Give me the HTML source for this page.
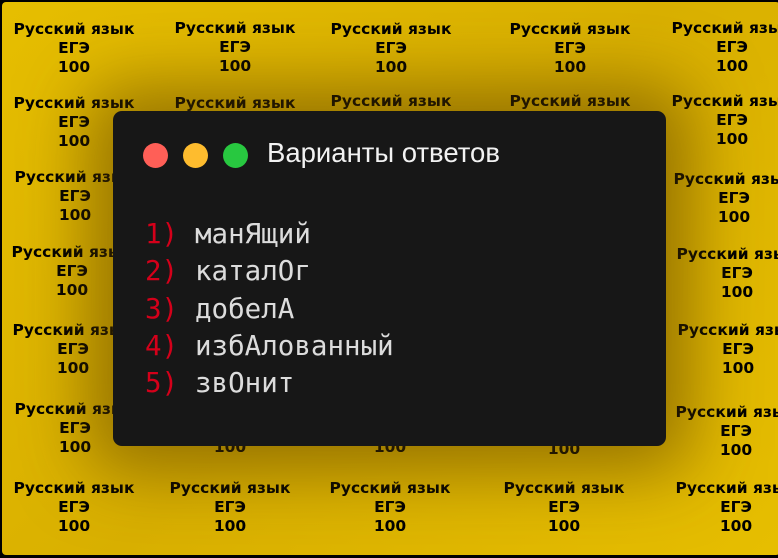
<!DOCTYPE html>
<html><head><meta charset="utf-8"><style>
html,body{margin:0;padding:0}
body{width:778px;height:558px;overflow:hidden;position:relative;background:#000}
.bg{position:absolute;left:2px;top:2px;width:778px;height:553px;border-radius:4px;background:linear-gradient(135deg,#e6be00,#d9b000 50%,#e6be00);overflow:hidden}
.b{position:absolute;width:160px;text-align:center;font:bold 15.5px/19px "DejaVu Sans",sans-serif;color:#000;white-space:nowrap}
.card{position:absolute;left:113px;top:111px;width:553px;height:335px;background:#171717;border-radius:9px;box-shadow:0 0 70px 25px rgba(90,60,0,0.55);z-index:2}
.dot{position:absolute;top:143px;width:25px;height:25px;border-radius:50%;z-index:3}
.title{position:absolute;left:267px;top:137px;font:27.5px "Liberation Sans",sans-serif;color:#f2f2f2;white-space:nowrap;z-index:3}
.ln{position:absolute;left:145px;font:27.5px "DejaVu Sans Mono",monospace;color:#dcdcdc;white-space:nowrap;z-index:3}
.ln span{color:#d4001a;display:inline-block;width:50px}
</style></head><body>
<div class="bg"></div>
<div style="position:absolute;left:0;top:0">
<div class="b" style="left:-6px;top:20px">Русский язык<br>ЕГЭ<br>100</div>
<div class="b" style="left:155px;top:19px">Русский язык<br>ЕГЭ<br>100</div>
<div class="b" style="left:311px;top:20px">Русский язык<br>ЕГЭ<br>100</div>
<div class="b" style="left:490px;top:20px">Русский язык<br>ЕГЭ<br>100</div>
<div class="b" style="left:652px;top:19px">Русский язык<br>ЕГЭ<br>100</div>
<div class="b" style="left:-6px;top:94px">Русский язык<br>ЕГЭ<br>100</div>
<div class="b" style="left:155px;top:94px">Русский язык<br>ЕГЭ<br>100</div>
<div class="b" style="left:311px;top:92px">Русский язык<br>ЕГЭ<br>100</div>
<div class="b" style="left:490px;top:92px">Русский язык<br>ЕГЭ<br>100</div>
<div class="b" style="left:652px;top:92px">Русский язык<br>ЕГЭ<br>100</div>
<div class="b" style="left:-5px;top:168px">Русский язык<br>ЕГЭ<br>100</div>
<div class="b" style="left:654px;top:170px">Русский язык<br>ЕГЭ<br>100</div>
<div class="b" style="left:-8px;top:243px">Русский язык<br>ЕГЭ<br>100</div>
<div class="b" style="left:657px;top:245px">Русский язык<br>ЕГЭ<br>100</div>
<div class="b" style="left:-7px;top:321px">Русский язык<br>ЕГЭ<br>100</div>
<div class="b" style="left:658px;top:321px">Русский язык<br>ЕГЭ<br>100</div>
<div class="b" style="left:-5px;top:400px">Русский язык<br>ЕГЭ<br>100</div>
<div class="b" style="left:150px;top:400px">Русский язык<br>ЕГЭ<br>100</div>
<div class="b" style="left:310px;top:400px">Русский язык<br>ЕГЭ<br>100</div>
<div class="b" style="left:484px;top:402px">Русский язык<br>ЕГЭ<br>100</div>
<div class="b" style="left:656px;top:403px">Русский язык<br>ЕГЭ<br>100</div>
<div class="b" style="left:-6px;top:479px">Русский язык<br>ЕГЭ<br>100</div>
<div class="b" style="left:150px;top:479px">Русский язык<br>ЕГЭ<br>100</div>
<div class="b" style="left:310px;top:479px">Русский язык<br>ЕГЭ<br>100</div>
<div class="b" style="left:484px;top:479px">Русский язык<br>ЕГЭ<br>100</div>
<div class="b" style="left:656px;top:479px">Русский язык<br>ЕГЭ<br>100</div>
</div>
<div class="card"></div>
<div class="dot" style="left:143px;background:#ff5f57"></div>
<div class="dot" style="left:183px;background:#febc2e"></div>
<div class="dot" style="left:223px;background:#28c840"></div>
<div class="title">Варианты ответов</div>
<div class="ln" style="top:218px"><span>1)</span>манЯщий</div>
<div class="ln" style="top:255px"><span>2)</span>каталОг</div>
<div class="ln" style="top:293px"><span>3)</span>добелА</div>
<div class="ln" style="top:330px"><span>4)</span>избАлованный</div>
<div class="ln" style="top:367px"><span>5)</span>звОнит</div>
</body></html>
